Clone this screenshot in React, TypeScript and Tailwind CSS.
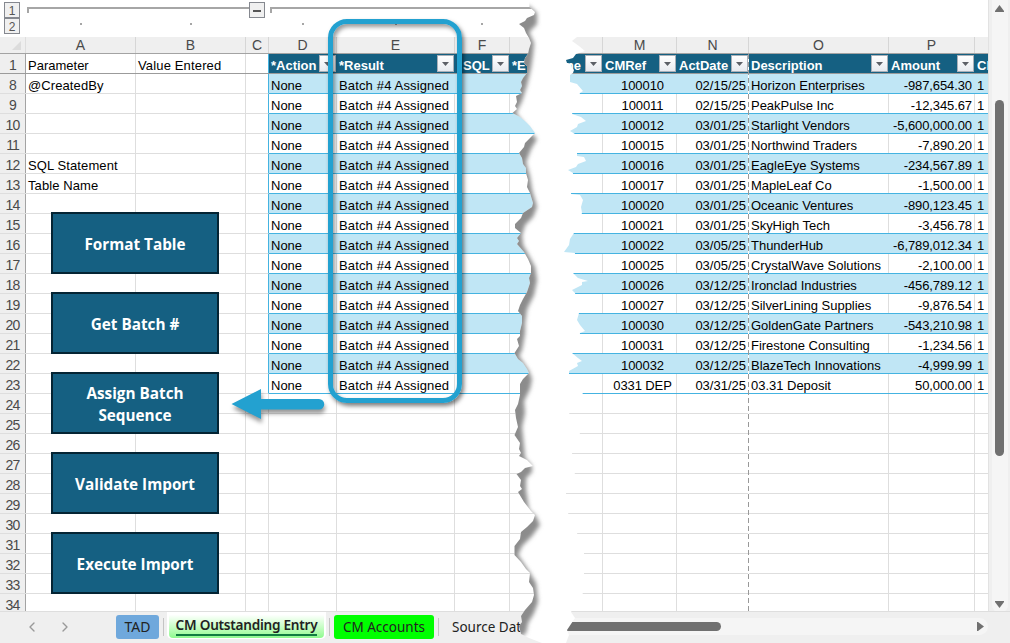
import React from 'react';
import { ChevronLeft, ChevronRight } from 'lucide-react';

type Align = 'left' | 'center' | 'right';

interface Column {
  letter: string;
  width: string;
  header?: string;
  align?: Align;
  table: boolean;
}

const columns: Column[] = [
  { letter: 'A', width: 'w-[110px]', table: false },
  { letter: 'B', width: 'w-[110px]', table: false },
  { letter: 'C', width: 'w-[23px]', table: false },
  { letter: 'D', width: 'w-[68px]', header: '*Action', table: true },
  { letter: 'E', width: 'w-[118px]', header: '*Result', table: true },
  { letter: 'F', width: 'w-[55px]', header: 'SQL', table: true },
  { letter: '', width: 'w-[93px]', header: '*E', table: true },
  { letter: 'M', width: 'w-[74px]', header: 'CMRef', align: 'center', table: true },
  { letter: 'N', width: 'w-[72px]', header: 'ActDate', align: 'right', table: true },
  { letter: 'O', width: 'w-[140px]', header: 'Description', table: true },
  { letter: 'P', width: 'w-[86px]', header: 'Amount', align: 'right', table: true },
  { letter: '', width: 'w-[14px]', header: 'Cl', table: true },
];

const entries = [
  ['100010', '02/15/25', 'Horizon Enterprises', '-987,654.30'],
  ['100011', '02/15/25', 'PeakPulse Inc', '-12,345.67'],
  ['100012', '03/01/25', 'Starlight Vendors', '-5,600,000.00'],
  ['100015', '03/01/25', 'Northwind Traders', '-7,890.20'],
  ['100016', '03/01/25', 'EagleEye Systems', '-234,567.89'],
  ['100017', '03/01/25', 'MapleLeaf Co', '-1,500.00'],
  ['100020', '03/01/25', 'Oceanic Ventures', '-890,123.45'],
  ['100021', '03/01/25', 'SkyHigh Tech', '-3,456.78'],
  ['100022', '03/05/25', 'ThunderHub', '-6,789,012.34'],
  ['100025', '03/05/25', 'CrystalWave Solutions', '-2,100.00'],
  ['100026', '03/12/25', 'Ironclad Industries', '-456,789.12'],
  ['100027', '03/12/25', 'SilverLining Supplies', '-9,876.54'],
  ['100030', '03/12/25', 'GoldenGate Partners', '-543,210.98'],
  ['100031', '03/12/25', 'Firestone Consulting', '-1,234.56'],
  ['100032', '03/12/25', 'BlazeTech Innovations', '-4,999.99'],
  ['0331 DEP', '03/31/25', '03.31 Deposit', '50,000.00'],
];

const parameters: Record<number, string> = {
  8: '@CreatedBy',
  12: 'SQL Statement',
  13: 'Table Name',
};

const rowNumbers = Array.from({ length: 27 }, (_, i) => i + 8);

const actions = ['Format Table', 'Get Batch #', 'Assign Batch Sequence', 'Validate Import', 'Execute Import'];

const alignClass: Record<Align, string> = {
  left: 'justify-start pl-[2px]',
  center: 'justify-center pl-[6px]',
  right: 'justify-end pr-[2px]',
};

// Letter spacing by column index
const tracking: Record<number, string> = {
  4: 'tracking-[0.15px]',
  7: 'tracking-[-0.1px]',
  9: 'tracking-[-0.02px]',
  10: 'tracking-[-0.1px]',
};

function FilterButton() {
  return (
    <span className="mr-px flex h-[17px] w-[17px] flex-none items-center justify-center border border-[#aab0b8] bg-linear-to-b from-white to-[#e8ebf0]">
      <svg width="7" height="4" viewBox="0 0 7 4">
        <path d="M0 0h7L3.5 4z" fill="#5c6067" />
      </svg>
    </span>
  );
}

function OutlineBar() {
  return (
    <div className="flex h-[37px] bg-white pt-[2px]">
      <div className="ml-1 flex w-4 flex-col text-[12px] leading-[16px] text-[#555]">
        <span className="flex h-4 justify-center border border-[#85888f] bg-[#f0f0f0] leading-[17px]">1</span>
        <span className="flex h-4 justify-center border border-[#85888f] bg-[#f0f0f0] leading-[17px]">2</span>
      </div>
      <svg className="ml-[7px] flex-none" width="530" height="35" viewBox="27 2 530 35">
        <path d="M249 8H28v5M540 8H271v5" fill="none" stroke="#a6a6a6" strokeWidth="2" />
        <rect x="249.5" y="2.5" width="15" height="15" fill="#f0f0f0" stroke="#85888f" />
        <path d="M253 11h8" stroke="#555" strokeWidth="2" />
        <path d="M80 23h2v2h-2zM190 23h2v2h-2zM302 23h2v2h-2zM395 23h2v2h-2zM481 23h2v2h-2z" fill="#a6a6a6" />
      </svg>
    </div>
  );
}

function ColumnLetters() {
  return (
    <div className="flex h-[17px] border-b border-[#a3a3a3] bg-[#efefef]">
      <div className="flex w-[26px] flex-none items-end justify-end border-r border-[#dedede] pr-[4px] pb-[3px]">
        <svg width="9" height="9" viewBox="0 0 9 9">
          <path d="M9 0v9H0z" fill="#dcdcdc" />
        </svg>
      </div>
      {columns.map((col, i) => (
        <div
          key={i}
          className={`${col.width} flex flex-none justify-center border-r border-[#d6d6d6] text-[14px] leading-[17px] text-[#4a4a4a]`}
        >
          {col.letter}
        </div>
      ))}
    </div>
  );
}

function RowNumber({ n }: { n: number }) {
  return (
    <div className="flex w-[26px] flex-none justify-center border-r border-[#a3a3a3] bg-[#efefef] text-[14px] leading-[22px] tracking-[-0.9px] text-[#4a4a4a]">
      {n}
    </div>
  );
}

function HeaderRow() {
  return (
    <div className="flex h-5 border-b border-[#9b9b9b]">
      <RowNumber n={1} />
      {columns.map((col, i) => {
        if (!col.table) {
          return (
            <div
              key={i}
              className={`${col.width} ${i === 2 ? 'border-[#44b3e1]' : 'border-[#dedede]'} flex-none border-r pl-[2px] leading-[23px]`}
            >
              {i === 0 ? 'Parameter' : i === 1 ? <span className="tracking-[0.15px]">Value Entered</span> : ''}
            </div>
          );
        }
        return (
          <div
            key={i}
            className={`${col.width} flex flex-none items-center overflow-hidden bg-[#156082] pl-[2px] font-bold leading-[19px] text-white`}
          >
            <span className={`pt-[3px] ${col.header === 'SQL' ? 'ml-[6px]' : ''}`}>{col.header}</span>
            <span className="flex-1" />
            {col.header === '*E' && <span className="mr-[4px] pt-[3px]">Name</span>}
            {col.header !== 'Cl' && <FilterButton />}
          </div>
        );
      })}
    </div>
  );
}

function SheetRow({ n }: { n: number }) {
  const entry = entries[n - 8];
  const banded = entry && n % 2 === 0;
  const values = ['', '', '', 'None', 'Batch #4 Assigned', '', '', ...(entry || []), '1'];

  return (
    <div className="flex h-5 flex-none">
      <div className="flex border-b border-[#dedede]">
        <RowNumber n={n} />
      </div>
      {columns.map((col, i) => {
        if (!col.table || !entry) {
          const edge = entry && i === 2 ? 'border-r-[#44b3e1]' : 'border-r-[#dedede]';
          return (
            <div
              key={i}
              className={`${col.width} ${edge} flex-none border-r border-b border-b-[#dedede] pl-[2px] leading-[23px] tracking-[0.1px] whitespace-nowrap`}
            >
              {i === 0 ? parameters[n] : ''}
            </div>
          );
        }
        const fill = banded ? 'bg-[#c0e6f5]' : 'bg-white';
        const divider = banded ? 'border-[#c0e6f5]' : 'border-[#dedede]';
        return (
          <div key={i} className={`${col.width} ${fill} flex flex-none flex-col`}>
            <div
              className={`${divider} ${alignClass[col.align || 'left']} flex h-[19px] overflow-hidden border-r leading-[23px] whitespace-nowrap`}
            >
              <span className={tracking[i]}>{values[i]}</span>
            </div>
            <div className="h-px bg-[#44b3e1]" />
          </div>
        );
      })}
    </div>
  );
}

function ActionButtons() {
  return (
    <div className="absolute top-[212px] left-[51px] flex w-[168px] flex-col gap-[18px]">
      {actions.map((label) => (
        <button
          key={label}
          className="flex h-[62px] items-center justify-center border-2 border-[#042433] bg-[#156082] px-5 pt-[2px] text-center font-['Open_Sans',sans-serif] text-[15.300px] leading-[22px] font-bold text-white"
        >
          {label}
        </button>
      ))}
    </div>
  );
}

const tornLeft =
  'M529 0L529.5 7L535 12L534 15L527 18L525 21L519 24L524 28L526 33L529 38L531 43L529 49L528 54L525 58L524 63L527 66L527 73L523 78L521 82L522 86L520 90L522 93L516 96L517 102L515 106L517 109L512.5 113L520 117L526 122L530 126L535 133L531 137L525 143L524 147L519 153L522 158L523 164L526 168L526 173L528 180L527 187L530 193L533 203L532 207L523 213L521 218L515 224L515 228L521 233L517 238L519 241L517 244L524 252L528 259L531 266L531 273L529 278L530 283L527 292L523 299L520 305L518 311L522 316L522 323L520 331L520 336L517 339L519 346L514.5 353L518 359L523 363L527 369L529 373L523 379L520 384L520 395L518 404L515 410L516 418L518 427L514.5 435L520 443L519 449L521 453L519 456L527 460L533 466L525 468L521 472L516.5 474L521 480L520 486L522 489L518 492L524 502L531 511L535 515L533 521L527 527L521 532L520 539L514.5 546L514.5 555L521 562L526 569L530 573L529 582L533 588L534 595L532 602L525 610L521 616L522 622L519 626L521 634L529 638L542 643';

const tornRight =
  'L566 643L569 635L567 630L575 618L571 612L583 593L584 573L584 553L577 533L568 513L566 493L575 473L572 453L580 433L569 413L583 393L569 374L569 371L578 366L577 363L582 361L578 358L572 353L579 341L580 333L585 331L580 325L577 320L579 313L575 293L572 290L582 285L582 282L588 281L578 278L573 273L575 253L564 252L569 245L570 239L574 233L582 213L581 207L583 200L580 195L571 194L573 173L568 170L576 167L578 164L586 161L584 157L577 156L577 153L575 134L570 131L577 127L578 124L586 121L581 117L572 114L580 93L583 91L577 84L570 82L570 75L573 73L574 70L572 68L571 64L567 63L566 60L573 58L576 54L585 51L579 46L572 41L577 37L572 0Z';

// Soft outer limit of the shade that follows the left tear
const shade =
  'M529 6L537 13L537 24L529 32L534 43L533 54L531 68L527 85L522 101L516 113L532 134L537 139L531 149L526 162L530 177L532 190L537 207L533 217L525 225L522 235L523 245L529 256L535 267L537 280L534 295L527 309L525 323L525 333L522 350L519 356L529 371L532 379L530 389L524 401L525 413L522 427L524 447L525 458L532 466L532 472L526 478L526 490L529 510L536 516L540 525L532 536L522 546L518 555L530 573L536 583L538 602L534 613L528 623L526 633L519 638L505 640L505 4Z';

function TornGap() {
  return (
    <svg className="absolute top-0 left-0" width="1010" height="643" viewBox="0 0 1010 643">
      <defs>
        <clipPath id="gap">
          <path d={tornLeft + tornRight} />
        </clipPath>
        <filter id="soften" x="-20%" y="-5%" width="140%" height="110%">
          <feGaussianBlur stdDeviation="2" />
        </filter>
      </defs>
      <path d={tornLeft + tornRight} fill="#fff" />
      <g clipPath="url(#gap)">
        <path d={shade} fill="#8c8c8c" filter="url(#soften)" />
      </g>
    </svg>
  );
}

function Callouts() {
  return (
    <>
      <div className="absolute top-[19px] left-[328px] h-[384px] w-[134px] rounded-[19px] border-[5px] border-[#23a1d0] shadow-[2px_3px_4px_rgba(0,0,0,0.5),inset_2px_3px_4px_rgba(0,0,0,0.4)]" />
      <svg
        className="absolute top-[380px] left-[225px] drop-shadow-[1px_4px_2px_rgba(0,0,0,0.4)]"
        width="110"
        height="50"
        viewBox="225 380 110 50"
      >
        <path d="M231.500 404L261 389v10h58a5 5 0 0 1 0 10.500H261v9.500z" fill="#23a1d0" />
      </svg>
    </>
  );
}

function VerticalScrollbar() {
  return (
    <div className="flex w-[22px] flex-none justify-center border-l border-[#e2e2e2] bg-[#efefef]">
      <div className="flex h-[613px] w-4 flex-col items-center rounded-b-lg bg-[#f5f5f5] pt-[5px] pb-[5px]">
        <svg width="9" height="7" viewBox="0 0 9 7">
          <path d="M4.500 0L9 6v1H0V6z" fill="#707070" />
        </svg>
        <div className="mt-[88px] h-[356px] w-[9px] rounded-full bg-[#707070]" />
        <svg className="mt-auto" width="9" height="7" viewBox="0 0 9 7">
          <path d="M4.500 7L9 1V0H0v1z" fill="#707070" />
        </svg>
      </div>
    </div>
  );
}

function TabBar() {
  return (
    <div className="flex h-[32px] flex-none border-t border-[#dedede] bg-[#efefef] font-['Noto_Sans',sans-serif] text-[14px] text-[#222]">
      <div className="flex w-[116px] flex-none items-center gap-[17px] pb-[2px] pl-[24px] text-[#999]">
        <ChevronLeft size={16} strokeWidth={2} />
        <ChevronRight size={16} strokeWidth={2} />
      </div>
      <div className="mt-[3px] flex h-6 w-[43px] items-center justify-center rounded-[3px] bg-[#6fa8dc] pb-px">TAD</div>
      <div className="mt-[6px] ml-1 h-[18px] w-px bg-[#c4c4c4]" />
      <div className="ml-[3px] h-[27px] w-[159px] rounded-b-[5px] bg-white px-[2px] pb-[1px]">
        <div className="flex h-full justify-center rounded-b-[4px] bg-linear-to-b from-white from-10% to-[#8dfa8d]">
          <span className="h-[24px] border-b-2 border-[#107c41] text-[13.600px] leading-[25px] font-semibold tracking-[-0.25px] whitespace-nowrap">
            CM Outstanding Entry
          </span>
        </div>
      </div>
      <div className="mt-[6px] ml-[3px] h-[18px] w-px bg-[#c4c4c4]" />
      <div className="mt-[3px] ml-1 flex h-6 w-[100px] items-center justify-center rounded-[3px] bg-[#00ff00] text-[13.500px] whitespace-nowrap">
        CM Accounts
      </div>
      <div className="mt-[6px] ml-1 h-[18px] w-px bg-[#c4c4c4]" />
      <div className="mt-[3px] ml-[13px] w-[109px] leading-6 text-[13.500px] whitespace-nowrap">Source Data</div>
      <div className="mt-[6px] flex h-[17px] flex-1 items-center rounded-r-full bg-[#f5f5f5] pr-[4px]">
        <div className="h-[9px] w-[160px] rounded-r-full bg-[#707070]" />
        <svg className="ml-auto" width="7" height="9" viewBox="0 0 7 9">
          <path d="M7 4.500L1 9H0V0h1z" fill="#707070" />
        </svg>
      </div>
      <div className="w-[22px] flex-none" />
    </div>
  );
}

export default function App() {
  return (
    <div className="relative flex h-[643px] w-[1010px] flex-col overflow-hidden bg-[#efefef] font-['Liberation_Sans',Arial,sans-serif] text-[13px] text-black">
      <div className="flex h-[611px] flex-none">
        <div className="flex w-[988px] flex-none flex-col overflow-hidden bg-white">
          <OutlineBar />
          <ColumnLetters />
          <HeaderRow />
          {rowNumbers.map((n) => (
            <SheetRow key={n} n={n} />
          ))}
        </div>
        <VerticalScrollbar />
      </div>
      <TabBar />

      {/* page break */}
      <div className="absolute top-[54px] left-[748px] h-[557px] w-px bg-[repeating-linear-gradient(to_bottom,#999_0,#999_5px,#fff_5px,#fff_8px)]" />
      <ActionButtons />
      <TornGap />
      <Callouts />
    </div>
  );
}
